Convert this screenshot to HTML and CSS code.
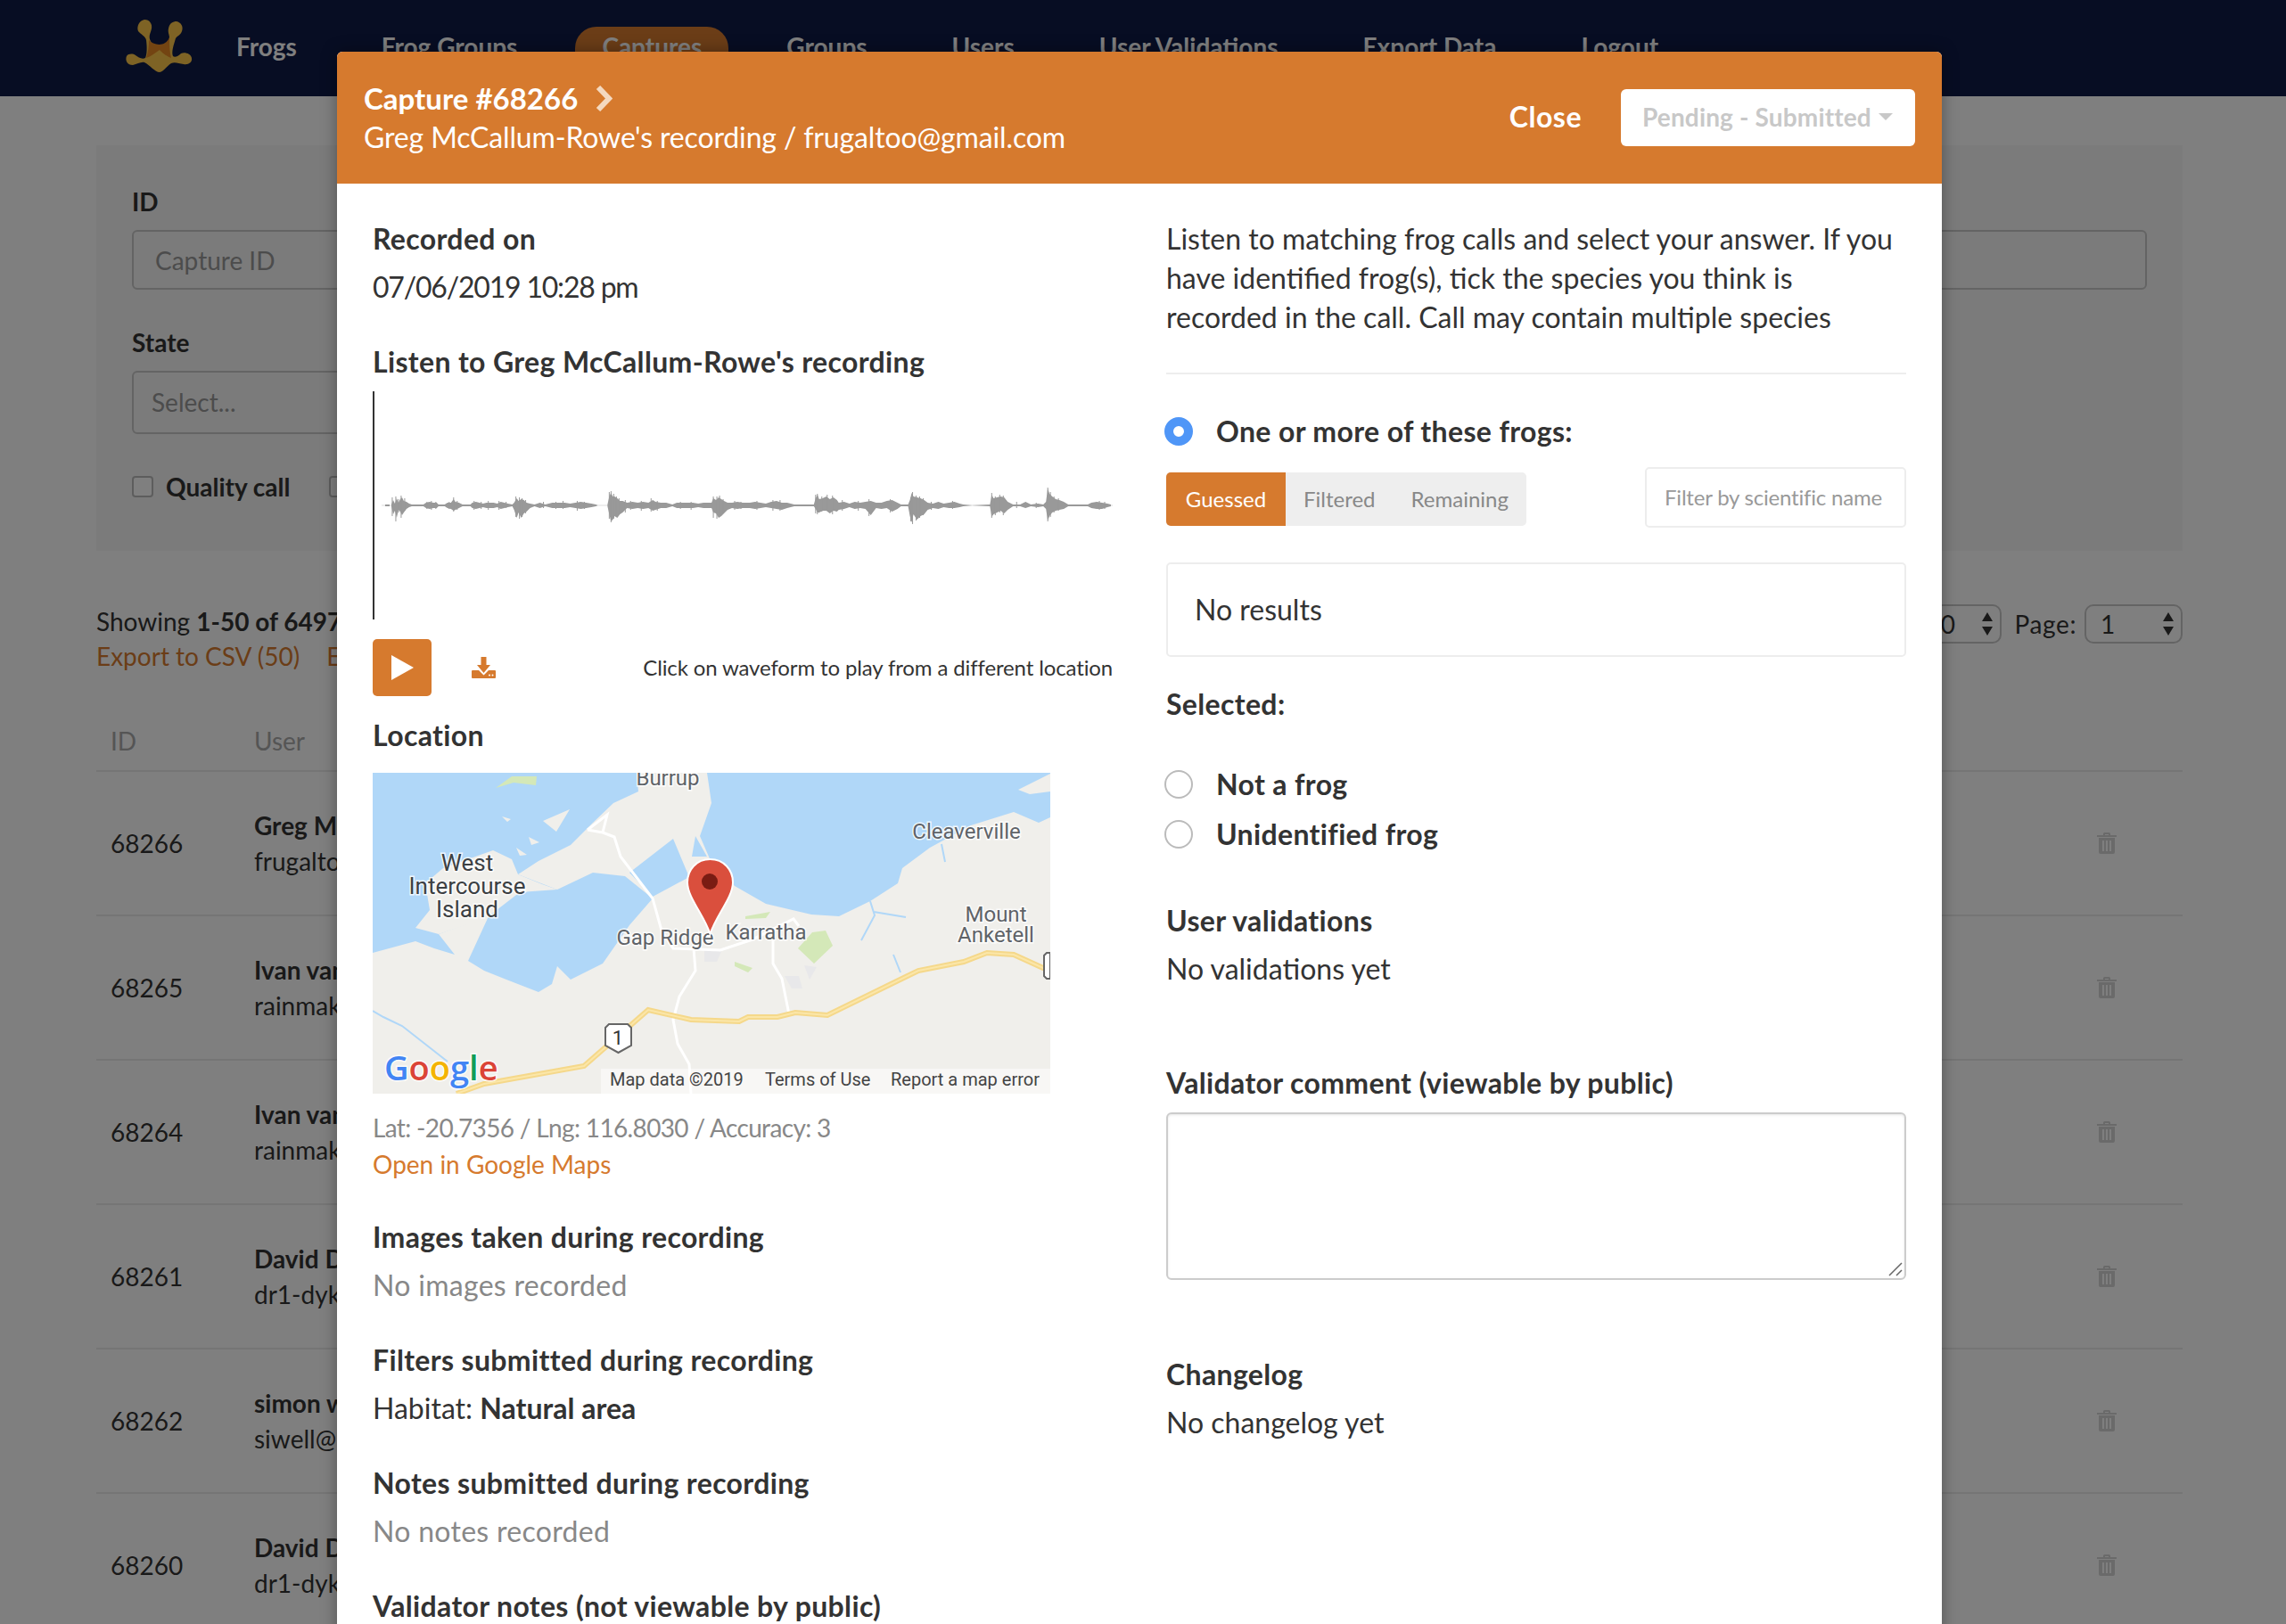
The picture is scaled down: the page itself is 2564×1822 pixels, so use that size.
FILE: index.html
```html
<!DOCTYPE html>
<html lang="en">
<head>
    <meta charset="UTF-8">
    <title>Captures</title>
    <link rel="stylesheet" href="styles.css">
</head>
<body>
<div class="page">
    <!-- Page behind the modal -->
    <nav class="nav">
        <svg class="logo" viewBox="0 0 100 75">
            <path class="logo-body" d="M32 7C38 7 41 12 40 17C39 22 37 24 38 29C40 35 44 37 50 37C56 37 59 33 60 27C60 24 58 21 59 17C60 11 64 9 68 9C73 10 76 15 74 20C73 24 69 25 67 28C65 35 62 43 64 48C66 50 70 48 73 45C77 43 84 45 85 50C86 55 81 58 76 57C70 56 66 54 62 56C57 59 54 65 49 66C44 66 38 58 32 55C28 54 24 57 19 58C13 58 10 53 12 48C14 45 19 45 22 47C25 49 29 52 33 50C35 46 35 38 34 30C33 25 28 24 25 20C23 15 26 8 32 7Z"/>
            <path class="logo-dark" d="M37 30C42 36 56 38 60 27C60 35 60 42 62 50C55 47 52 44 49 41C44 44 40 48 34 50C36 44 37 37 37 30Z"/>
        </svg>
        <a class="nav-link">Frogs</a>
        <a class="nav-link">Frog Groups</a>
        <a class="nav-link active">Captures</a>
        <a class="nav-link">Groups</a>
        <a class="nav-link">Users</a>
        <a class="nav-link">User Validations</a>
        <a class="nav-link">Export Data</a>
        <a class="nav-link">Logout</a>
    </nav>

    <main class="content">
        <section class="filters">
            <div class="filter-label">ID</div>
            <div class="filter-input">Capture ID</div>
            <div class="filter-label state-label">State</div>
            <div class="filter-input select-input">Select...</div>
            <div class="check-row">
                <span class="checkbox"></span>
                <span class="check-text">Quality call</span>
                <span class="checkbox"></span>
            </div>
        </section>

        <div class="results-bar">
            <div>
                <div class="results-line">Showing <b>1-50 of 6497</b></div>
                <div class="results-line export-links"><a>Export to CSV (50)</a><a>Export all</a></div>
            </div>
            <div class="pager">
                <span class="fake-select per-page">50<i class="arrows"></i></span>
                <span class="page-label">Page:</span>
                <span class="fake-select">1<i class="arrows"></i></span>
            </div>
        </div>

        <div class="table-head">
            <span class="col-id">ID</span>
            <span>User</span>
        </div>
        <div class="table-row">
            <span class="col-id">68266</span>
            <div class="col-user"><b>Greg McCallum-Rowe</b><span>frugaltoo@gmail.com</span></div>
            <svg class="trash" viewBox="0 0 22 24"><path d="M7 3V1.500Q7 0 8.500 0H13.500Q15 0 15 1.500V3H22V5H0V3ZM9 3H13V2H9ZM2 6H20V22Q20 24 18 24H4Q2 24 2 22ZM6 9V21H8V9ZM10 9V21H12V9ZM14 9V21H16V9Z"/></svg>
        </div>
        <div class="table-row">
            <span class="col-id">68265</span>
            <div class="col-user"><b>Ivan van Wyk</b><span>rainmaker@gmail.com</span></div>
            <svg class="trash" viewBox="0 0 22 24"><path d="M7 3V1.500Q7 0 8.500 0H13.500Q15 0 15 1.500V3H22V5H0V3ZM9 3H13V2H9ZM2 6H20V22Q20 24 18 24H4Q2 24 2 22ZM6 9V21H8V9ZM10 9V21H12V9ZM14 9V21H16V9Z"/></svg>
        </div>
        <div class="table-row">
            <span class="col-id">68264</span>
            <div class="col-user"><b>Ivan van Wyk</b><span>rainmaker@gmail.com</span></div>
            <svg class="trash" viewBox="0 0 22 24"><path d="M7 3V1.500Q7 0 8.500 0H13.500Q15 0 15 1.500V3H22V5H0V3ZM9 3H13V2H9ZM2 6H20V22Q20 24 18 24H4Q2 24 2 22ZM6 9V21H8V9ZM10 9V21H12V9ZM14 9V21H16V9Z"/></svg>
        </div>
        <div class="table-row">
            <span class="col-id">68261</span>
            <div class="col-user"><b>David Dyke</b><span>dr1-dyke@gmail.com</span></div>
            <svg class="trash" viewBox="0 0 22 24"><path d="M7 3V1.500Q7 0 8.500 0H13.500Q15 0 15 1.500V3H22V5H0V3ZM9 3H13V2H9ZM2 6H20V22Q20 24 18 24H4Q2 24 2 22ZM6 9V21H8V9ZM10 9V21H12V9ZM14 9V21H16V9Z"/></svg>
        </div>
        <div class="table-row">
            <span class="col-id">68262</span>
            <div class="col-user"><b>simon well</b><span>siwell@bigpond.com</span></div>
            <svg class="trash" viewBox="0 0 22 24"><path d="M7 3V1.500Q7 0 8.500 0H13.500Q15 0 15 1.500V3H22V5H0V3ZM9 3H13V2H9ZM2 6H20V22Q20 24 18 24H4Q2 24 2 22ZM6 9V21H8V9ZM10 9V21H12V9ZM14 9V21H16V9Z"/></svg>
        </div>
        <div class="table-row">
            <span class="col-id">68260</span>
            <div class="col-user"><b>David Dyke</b><span>dr1-dyke@gmail.com</span></div>
            <svg class="trash" viewBox="0 0 22 24"><path d="M7 3V1.500Q7 0 8.500 0H13.500Q15 0 15 1.500V3H22V5H0V3ZM9 3H13V2H9ZM2 6H20V22Q20 24 18 24H4Q2 24 2 22ZM6 9V21H8V9ZM10 9V21H12V9ZM14 9V21H16V9Z"/></svg>
        </div>
    </main>

    <div class="overlay"></div>

    <!-- Capture modal -->
    <div class="modal">
        <header class="modal-header">
            <div class="modal-title">
                <div class="title-line">Capture #68266
                    <svg class="chevron" viewBox="0 0 19 29"><path d="M3 2L15 14.500L3 27"/></svg>
                </div>
                <div class="subtitle">Greg McCallum-Rowe's recording / frugaltoo@gmail.com</div>
            </div>
            <a class="close-link">Close</a>
            <div class="status-btn">Pending - Submitted<i class="caret"></i></div>
        </header>

        <div class="modal-body">
            <div class="col col-left">
                <div class="section">
                    <div class="heading">Recorded on</div>
                    <div class="value date-value">07/06/2019 10:28 pm</div>
                </div>

                <div class="section-audio">
                    <div class="heading heading-tight">Listen to Greg McCallum-Rowe's recording</div>
                    <div class="wave">
                        <svg class="wave-svg" viewBox="0 0 830 256">
                            <line class="wave-line" x1="8" y1="128" x2="830" y2="128"/>
                            <path class="wave-shape" d="M12 127L17 127L17 129L12 129ZM19 127L21 122L23 126L25 120L27 125L29 121L31 119L33 123L36 124L39 126L42 127L55 127L58 125L62 124L66 125L70 125L72 127L79 127L82 125L86 125L89 121L91 124L95 125L99 127L108 127L110 125L114 124L118 125L122 126L126 125L130 125L134 125L138 126L142 124L146 125L150 126L155 127L157 125L160 120L162 123L165 121L168 122L171 125L175 126L180 127L186 125L192 127L200 125L208 125L214 125L220 126L226 125L232 124L238 125L244 126L249 127L251 128L249 129L244 130L238 131L232 132L226 131L220 130L214 131L208 131L200 131L192 129L186 131L180 129L175 131L171 135L168 137L165 142L162 136L160 142L157 133L155 129L150 130L146 131L142 132L138 130L134 131L130 131L126 131L122 130L118 131L114 132L110 131L108 129L99 129L95 131L91 133L89 134L86 132L82 131L79 129L72 129L70 131L66 131L62 132L58 131L55 129L42 129L39 130L36 132L33 136L31 139L29 135L27 133L25 142L23 134L21 138L19 129ZM262 127L264 118L266 114L268 118L270 118L273 120L276 123L279 123L284 125L290 124L296 125L302 124L308 125L313 122L316 124L322 125L328 125L335 127L340 125L346 125L352 125L358 125L364 126L370 125L379 125L381 120L384 122L387 119L390 121L393 123L397 125L402 125L408 124L414 125L422 125L428 124L434 125L440 126L446 124L452 123L458 125L464 125L472 127L494 127L496 120L498 116L500 121L504 120L508 118L512 121L516 119L520 122L522 125L528 124L534 126L540 124L546 125L552 124L558 123L564 125L570 125L576 123L582 122L588 125L592 127L600 127L602 122L604 114L606 118L610 119L614 120L618 122L622 125L628 126L634 124L640 126L646 125L652 124L658 126L662 127L672 128L692 127L694 116L696 120L700 119L704 118L708 119L712 124L718 127L726 127L732 124L738 127L746 126L752 127L755 124L757 109L759 115L762 118L766 121L770 122L775 124L780 127L790 127L798 127L802 127L806 125L812 124L818 125L824 126L828 127L828 129L824 130L818 132L812 132L806 131L802 129L790 129L780 129L775 132L770 133L766 134L762 136L759 140L757 145L755 132L752 129L746 130L738 129L732 131L726 129L718 129L712 133L708 137L704 134L700 136L696 138L694 141L692 129L672 128L662 129L658 130L652 131L646 131L640 130L634 132L628 131L622 133L618 138L614 140L610 144L606 138L604 147L602 140L600 129L592 129L588 132L582 135L576 131L570 132L564 131L558 139L552 132L546 131L540 132L534 130L528 132L522 133L520 135L516 134L512 137L508 134L504 134L500 136L498 136L496 132L494 129L472 129L464 131L458 133L452 132L446 131L440 130L434 131L428 132L422 131L414 131L408 132L402 131L397 133L393 137L390 140L387 142L384 137L381 136L379 131L370 131L364 130L358 131L352 131L346 131L340 131L335 129L328 131L322 131L316 133L313 134L308 131L302 132L296 131L290 132L284 131L279 136L276 138L273 142L270 140L268 144L266 146L264 138L262 129Z"/>
                            <path class="wave-noise" d="M20 119V140M24 118V146M27 121V136M30 117V142M34 120V134M59 124V132M64 123V133M69 124V132M84 124V132M89 119V135M93 123V133M112 123V133M120 124V132M128 123V133M140 123V133M148 124V131M159 118V141M163 119V143M166 120V141M170 122V137M190 124V131M204 124V132M212 123V132M228 123V134M236 124V132M264 113V143M266 112V147M269 115V143M272 118V141M275 120V138M282 122V136M288 123V133M300 123V134M311 120V135M318 123V134M344 124V132M356 124V133M381 118V142M385 118V143M388 117V140M392 121V137M405 123V133M412 124V132M430 123V133M448 122V134M456 122V134M496 116V137M498 115V138M503 118V135M509 116V134M515 117V138M526 122V134M544 123V134M556 121V140M580 121V136M603 119V146M605 113V149M609 117V145M613 118V142M617 120V139M626 124V133M650 123V132M694 114V142M698 118V139M703 116V136M707 117V139M722 124V131M744 125V131M757 108V146M760 113V141M764 118V136M769 120V134M815 123V133M821 124V132"/>
                        </svg>
                    </div>
                    <div class="audio-controls">
                        <button type="button" class="play-btn"><svg class="play-icon" viewBox="0 0 25 28"><path d="M0 0L25 14L0 28Z"/></svg></button>
                        <svg class="download-icon" viewBox="0 0 27 24">
                            <path d="M1 15H8L13.500 20.500L19 15H26Q27 15 27 16V23Q27 24 26 24H1Q0 24 0 23V16Q0 15 1 15Z"/>
                            <path d="M10.500 0H16.500V9H21L13.500 18L6 9H10.500Z"/>
                            <circle class="download-dot" cx="20" cy="20.500" r="1"/>
                            <circle class="download-dot" cx="23.500" cy="20.500" r="1"/>
                        </svg>
                        <span class="wave-hint">Click on waveform to play from a different location</span>
                    </div>
                </div>

                <div class="heading heading-location">Location</div>
                <svg class="map" viewBox="0 0 760 360">
                    <rect class="land" width="760" height="360"/>
                    <path class="water" d="M0 0H296L298 21L270 34L247 56L222 81L186 99L163 114L207 131L247 112L283 116L314 141L288 171L258 214L222 232L207 217L201 237L186 246L150 232L125 222L107 211L130 161L74 181L92 204L69 197L48 189L0 202Z"/>
                    <path class="land" d="M48 174L64 154L59 124L79 107L135 87L156 97L163 114L190 125L207 131L165 134L130 161L125 164L74 181Z"/>
                    <path class="land" d="M191 54L221 41L206 66Z M161 84L173 92L165 93Z M145 49L155 52L151 55Z M175 72L187 78L178 81Z"/>
                    <path class="water" d="M337 74L355 117L314 139L288 112Z M362 71L375 94L358 94Z"/>
                    <path class="water" d="M375 0H760V50L747 56L719 44L671 59L625 84L594 107L589 124L558 144L523 161L492 159L441 147L406 127L380 101L367 71L380 34Z"/>
                    <path class="land" d="M760 1L724 19L737 24L760 21Z"/>
                    <path class="park" d="M138 17L156 4L184 4L183 14L158 11Z M477 197L493 179L508 177L516 194L495 214Z M406 212L426 219L421 224L406 217Z M418 161L446 156L441 163L418 164Z"/>
                    <path class="block" d="M372 198H392L386 212H372Z M462 228H478L482 242H470Z M484 216L498 218L490 232Z"/>
                    <path class="creek" d="M0 267L12 274L33 284L84 324M558 144L563 160L548 188M562 156L598 162M584 204L592 224M638 80L642 100"/>
                    <path class="road" d="M241 64L263 47L258 67L271 72L278 94L314 141L324 177L337 197L390 199L426 187L472 164L478 172M258 67L241 64M360 197L362 222L344 251L337 277L342 304L355 327L357 360M449 187L449 214L459 231L467 271"/>
                    <path class="hwy-edge" d="M94 360L125 349L237 329L309 266L357 277L411 279L421 274L454 274L474 269L510 272L612 222L663 212L689 202L719 204L752 219L760 220"/>
                    <path class="hwy" d="M94 360L125 349L237 329L309 266L357 277L411 279L421 274L454 274L474 269L510 272L612 222L663 212L689 202L719 204L752 219L760 220"/>
                    <path class="badge" d="M265 282H286L290 286V306L275.500 314L261 306V286Z"/>
                    <path class="badge" d="M760 202H756L753 205V228L756 231H760Z"/>
                    <text class="badge-text" x="275" y="305">1</text>
                    <text class="map-label map-dark" x="106" y="110">West</text>
                    <text class="map-label map-dark" x="106" y="136">Intercourse</text>
                    <text class="map-label map-dark" x="106" y="162">Island</text>
                    <text class="map-label" x="331" y="14">Burrup</text>
                    <text class="map-label" x="666" y="74">Cleaverville</text>
                    <text class="map-label" x="328" y="193">Gap Ridge</text>
                    <text class="map-label" x="441" y="187">Karratha</text>
                    <text class="map-label" x="699" y="167">Mount</text>
                    <text class="map-label" x="699" y="190">Anketell</text>
                    <path class="pin" d="M378.500 97C363 97 353 109 353 123C353 140 372 160 378.500 181C385 160 404 140 404 123C404 109 394 97 378.500 97Z"/>
                    <circle class="pin-dot" cx="378" cy="122" r="9"/>
                    <text class="google" x="13" y="345"><tspan class="g-blue">G</tspan><tspan class="g-red">o</tspan><tspan class="g-yellow">o</tspan><tspan class="g-blue">g</tspan><tspan class="g-green">l</tspan><tspan class="g-red">e</tspan></text>
                    <rect class="map-footer" x="256" y="332" width="504" height="28"/>
                    <text class="map-footer-text" x="266" y="351">Map data ©2019</text>
                    <text class="map-footer-text" x="440" y="351">Terms of Use</text>
                    <text class="map-footer-text" x="581" y="351">Report a map error</text>
                </svg>
                <div class="coords">Lat: -20.7356 / Lng: 116.8030 / Accuracy: 3</div>
                <a class="maps-link">Open in Google Maps</a>

                <div class="section section-images">
                    <div class="heading">Images taken during recording</div>
                    <div class="value muted">No images recorded</div>
                </div>
                <div class="section">
                    <div class="heading">Filters submitted during recording</div>
                    <div class="value">Habitat: <b>Natural area</b></div>
                </div>
                <div class="section">
                    <div class="heading">Notes submitted during recording</div>
                    <div class="value muted">No notes recorded</div>
                </div>
                <div class="section">
                    <div class="heading">Validator notes (not viewable by public)</div>
                </div>
            </div>

            <div class="col">
                <p class="intro">Listen to matching frog calls and select your answer. If you have identified frog(s), tick the species you think is recorded in the call. Call may contain multiple species</p>
                <hr class="divider">

                <div class="radio-row first-radio"><span class="radio checked"></span>One or more of these frogs:</div>
                <div class="tab-row">
                    <div class="tabs">
                        <span class="tab active">Guessed</span>
                        <span class="tab">Filtered</span>
                        <span class="tab">Remaining</span>
                    </div>
                    <div class="sci-filter">Filter by scientific name</div>
                </div>
                <div class="results-box">No results</div>
                <div class="heading selected-heading">Selected:</div>
                <div class="radio-row not-frog"><span class="radio"></span>Not a frog</div>
                <div class="radio-row unidentified"><span class="radio"></span>Unidentified frog</div>

                <div class="heading validations-heading">User validations</div>
                <div class="value">No validations yet</div>

                <div class="heading comment-heading">Validator comment (viewable by public)</div>
                <div class="comment-box">
                    <svg class="resize-grip" viewBox="0 0 16 16"><path d="M1 15L15 1M9 15L15 9"/></svg>
                </div>

                <div class="heading changelog-heading">Changelog</div>
                <div class="value">No changelog yet</div>
            </div>
        </div>
    </div>
</div>
</body>
</html>
```

FILE: styles.css
```css
:root {
    --orange: #d67a2e;
    --text: #333333;
    --border: #ededed;
    --muted: #888888;
}

html, body {
    margin: 0;
    height: 100%;
    overflow: hidden;
}

body {
    font-family: Lato, "Open Sans", sans-serif;
    font-size: 32px;
    color: var(--text);
    background: #ffffff;
}

b {
    font-weight: 700;
}

.page {
    position: relative;
    height: 1822px;
    overflow: hidden;
}

/* Nav */
.nav {
    display: flex;
    align-items: flex-start;
    gap: 35px;
    height: 78px;
    padding: 30px 0 0 130px;
    background: #0f1b47;
    overflow: hidden;
}

.logo {
    width: 100px;
    height: 75px;
    margin-top: -15px;
    margin-right: -30px;
}

.logo-body {
    fill: #fcc64a;
}

.logo-dark {
    fill: #e68824;
}

.nav-link {
    padding: 0 30px;
    height: 60px;
    line-height: 44px;
    font-size: 28px;
    font-weight: 700;
    color: #ffffff;
    border-radius: 24px 24px 0 0;
}

.nav-link.active {
    background: var(--orange);
}

/* Background page */
.content {
    margin: 55px 116px 0 108px;
    font-size: 28px;
}

.filters {
    height: 455px;
    box-sizing: border-box;
    padding: 43px 40px 0;
    background: #f6f6f6;
}

.filter-label {
    line-height: 40px;
    font-weight: 700;
}

.state-label {
    margin-top: 39px;
}

.filter-input {
    box-sizing: border-box;
    height: 67px;
    margin-top: 12px;
    padding-left: 24px;
    line-height: 65px;
    color: #999999;
    border: 2px solid #c8c8c8;
    border-radius: 6px;
}

.select-input {
    width: 900px;
    height: 71px;
    padding-left: 20px;
    line-height: 67px;
}

.check-row {
    display: flex;
    align-items: center;
    margin-top: 39px;
    height: 40px;
}

.checkbox {
    width: 20px;
    height: 20px;
    border: 2px solid #bbbbbb;
    border-radius: 4px;
    background: #ffffff;
}

.check-text {
    margin: 0 44px 0 14px;
    font-weight: 700;
}

.results-bar {
    display: flex;
    justify-content: space-between;
    margin-top: 60px;
}

.results-line {
    line-height: 39px;
}

.export-links a {
    margin-right: 30px;
    color: var(--orange);
}

.pager {
    display: flex;
    align-items: center;
    gap: 9px;
    height: 44px;
}

.page-label {
    margin-left: 6px;
    letter-spacing: 0.6px;
}

.fake-select {
    display: flex;
    align-items: center;
    justify-content: space-between;
    box-sizing: border-box;
    width: 110px;
    height: 44px;
    padding: 0 8px 0 16px;
    border: 2px solid #c8c8c8;
    border-radius: 10px;
}

.per-page {
    padding-left: 24px;
}

.arrows {
    display: block;
    position: relative;
    width: 12px;
    height: 26px;
}

.arrows::before,
.arrows::after {
    content: "";
    position: absolute;
    left: 0;
    border-left: 6px solid transparent;
    border-right: 6px solid transparent;
}

.arrows::before {
    top: 0;
    border-bottom: 10px solid var(--text);
}

.arrows::after {
    bottom: 0;
    border-top: 10px solid var(--text);
}

.table-head {
    display: flex;
    height: 53px;
    margin-top: 55px;
    line-height: 40px;
    color: #aaaaaa;
    border-bottom: 2px solid #ebebeb;
}

.col-id {
    width: 161px;
    padding-left: 16px;
}

.table-row {
    display: flex;
    align-items: center;
    box-sizing: border-box;
    height: 162px;
    border-bottom: 2px solid #ebebeb;
}

.col-user {
    display: flex;
    flex: 1;
    flex-direction: column;
    line-height: 40px;
}

.trash {
    width: 22px;
    height: 24px;
    margin-right: 74px;
    fill: #d4d4d4;
}

.overlay {
    position: absolute;
    inset: 0;
    background: rgba(0, 0, 0, 0.5);
}

/* Modal */
.modal {
    position: absolute;
    top: 58px;
    left: 378px;
    width: 1800px;
    min-height: 1800px;
    background: #ffffff;
    border-radius: 6px 6px 0 0;
    box-shadow: 0 0 18px rgba(0, 0, 0, 0.35);
}

.modal-header {
    display: flex;
    align-items: center;
    box-sizing: border-box;
    height: 148px;
    padding: 0 30px;
    color: #ffffff;
    background: var(--orange);
    border-radius: 6px 6px 0 0;
}

.modal-title {
    flex: 1;
}

.title-line {
    display: flex;
    align-items: center;
    gap: 20px;
    line-height: 44px;
    font-size: 33px;
    font-weight: 700;
}

.chevron {
    width: 19px;
    height: 29px;
    fill: none;
    stroke: #f4d9c0;
    stroke-width: 6;
}

.subtitle {
    line-height: 44px;
    letter-spacing: -0.14px;
}

.close-link {
    margin-right: 44px;
    padding-bottom: 3px;
    font-weight: 700;
    letter-spacing: 0.5px;
}

.status-btn {
    display: flex;
    align-items: center;
    gap: 8px;
    box-sizing: border-box;
    width: 330px;
    height: 64px;
    padding: 0 0 2px 24px;
    font-size: 28px;
    font-weight: 700;
    letter-spacing: 0.15px;
    color: #c8c8c8;
    background: #ffffff;
    border-radius: 6px;
}

.caret {
    border-left: 8px solid transparent;
    border-right: 8px solid transparent;
    border-top: 8px solid #c8c8c8;
}

.modal-body {
    display: flex;
    gap: 60px;
    padding: 40px 40px 0;
}

.col {
    width: 830px;
    flex: none;
}

.col-left {
    margin-top: 2px;
}

.heading {
    line-height: 40px;
    font-weight: 700;
    letter-spacing: 0.35px;
    margin-bottom: 14px;
}

.value {
    line-height: 40px;
}

.date-value {
    letter-spacing: -1.2px;
}

.muted {
    color: var(--muted);
    letter-spacing: 0.3px;
}

.section {
    margin-bottom: 44px;
}

.heading-tight {
    margin-bottom: 13px;
}

.wave-svg {
    display: block;
    width: 830px;
    height: 256px;
    border-left: 2px solid #333333;
    box-sizing: border-box;
}

.wave-line {
    stroke: #eeeeee;
    stroke-width: 2;
}

.wave-shape {
    fill: #999999;
}

.wave-noise {
    fill: none;
    stroke: #999999;
    stroke-width: 1;
}

.audio-controls {
    display: flex;
    align-items: center;
    margin-top: 22px;
}

.play-btn {
    display: flex;
    align-items: center;
    justify-content: center;
    width: 66px;
    height: 64px;
    padding: 0;
    border: none;
    border-radius: 5px;
    background: var(--orange);
}

.play-icon {
    width: 25px;
    height: 28px;
    fill: #ffffff;
}

.download-icon {
    width: 27px;
    height: 24px;
    margin-left: 45px;
    fill: var(--orange);
}

.download-dot {
    fill: #ffffff;
}

.wave-hint {
    margin-left: auto;
    padding-bottom: 2px;
    font-size: 24px;
    letter-spacing: -0.13px;
}

.heading-location {
    margin: 24px 0 22px;
}

.map {
    display: block;
    width: 760px;
    height: 360px;
}

.land {
    fill: #f0efeb;
}

.water {
    fill: #b0d7f8;
}

.park {
    fill: #d4e8b8;
}

.block {
    fill: #e8e8ea;
}

.creek {
    fill: none;
    stroke: #b0d7f8;
    stroke-width: 2;
}

.road {
    fill: none;
    stroke: #ffffff;
    stroke-width: 3;
}

.hwy-edge {
    fill: none;
    stroke: #f5d88a;
    stroke-width: 6;
}

.hwy {
    fill: none;
    stroke: #fbe6a8;
    stroke-width: 2;
}

.badge {
    fill: #ffffff;
    stroke: #666666;
    stroke-width: 2;
}

.badge-text {
    font: 22px Roboto, sans-serif;
    text-anchor: middle;
    fill: #333333;
}

.map-label {
    font: 24px Roboto, sans-serif;
    text-anchor: middle;
    fill: #5f6368;
    stroke: rgba(255, 255, 255, 0.8);
    stroke-width: 3px;
    paint-order: stroke;
}

.map-dark {
    font-size: 26px;
    fill: #3c4043;
}

.pin {
    fill: #da4f3d;
    stroke: #ffffff;
    stroke-width: 2;
}

.pin-dot {
    fill: #7a1c13;
}

.google {
    font: 600 38px "Open Sans", sans-serif;
    stroke: rgba(255, 255, 255, 0.8);
    stroke-width: 3px;
    paint-order: stroke;
}

.g-blue { fill: #4285f4; }
.g-red { fill: #db4437; }
.g-yellow { fill: #f4b400; }
.g-green { fill: #0f9d58; }

.map-footer {
    fill: rgba(255, 255, 255, 0.5);
}

.map-footer-text {
    font: 20px Roboto, sans-serif;
    fill: #444444;
}

.coords {
    margin-top: 18px;
    line-height: 40px;
    font-size: 28px;
    letter-spacing: -0.65px;
    color: var(--muted);
}

.maps-link {
    display: block;
    margin-top: 1px;
    line-height: 40px;
    font-size: 28px;
    color: var(--orange);
}

.section-images {
    margin-top: 42px;
}

.intro {
    margin: 0;
    line-height: 44px;
}

.divider {
    height: 2px;
    margin: 40px 0 0;
    border: none;
    background: var(--border);
}

.radio-row {
    display: flex;
    align-items: center;
    gap: 26px;
    line-height: 40px;
    font-weight: 700;
    letter-spacing: 0.35px;
}

.radio {
    box-sizing: border-box;
    width: 32px;
    height: 32px;
    margin-left: -2px;
    border: 2px solid #bbbbbb;
    border-radius: 50%;
    background: #ffffff;
}

.radio.checked {
    border: 10px solid #4f96f7;
}

.first-radio {
    margin-top: 44px;
}

.tab-row {
    display: flex;
    align-items: center;
    justify-content: space-between;
    height: 68px;
    margin-top: 20px;
}

.tabs {
    display: flex;
    align-items: center;
    height: 60px;
    margin-top: 4px;
    font-size: 24px;
    color: #888888;
    background: #eeeeee;
    border-radius: 5px;
    overflow: hidden;
}

.tab {
    padding: 0 20px;
    line-height: 60px;
}

.tab.active {
    width: 134px;
    box-sizing: border-box;
    text-align: center;
    padding: 0;
    color: #ffffff;
    background: var(--orange);
}

.sci-filter {
    box-sizing: border-box;
    width: 293px;
    height: 68px;
    padding-left: 20px;
    line-height: 64px;
    font-size: 24px;
    letter-spacing: -0.2px;
    color: #999999;
    border: 2px solid var(--border);
    border-radius: 5px;
}

.results-box {
    box-sizing: border-box;
    height: 106px;
    margin-top: 39px;
    padding-left: 30px;
    line-height: 102px;
    border: 2px solid var(--border);
    border-radius: 5px;
}

.selected-heading {
    margin: 33px 0 0;
}

.not-frog {
    margin-top: 50px;
}

.unidentified {
    margin-top: 16px;
}

.validations-heading {
    margin-top: 57px;
}

.comment-heading {
    margin: 88px 0 13px;
}

.comment-box {
    position: relative;
    box-sizing: border-box;
    height: 188px;
    border: 2px solid #cccccc;
    border-radius: 6px;
    box-shadow: inset 0 1px 3px rgba(0, 0, 0, 0.1);
}

.resize-grip {
    position: absolute;
    right: 2px;
    bottom: 2px;
    width: 16px;
    height: 16px;
    fill: none;
    stroke: #666666;
    stroke-width: 1.500;
}

.changelog-heading {
    margin-top: 86px;
}
```
